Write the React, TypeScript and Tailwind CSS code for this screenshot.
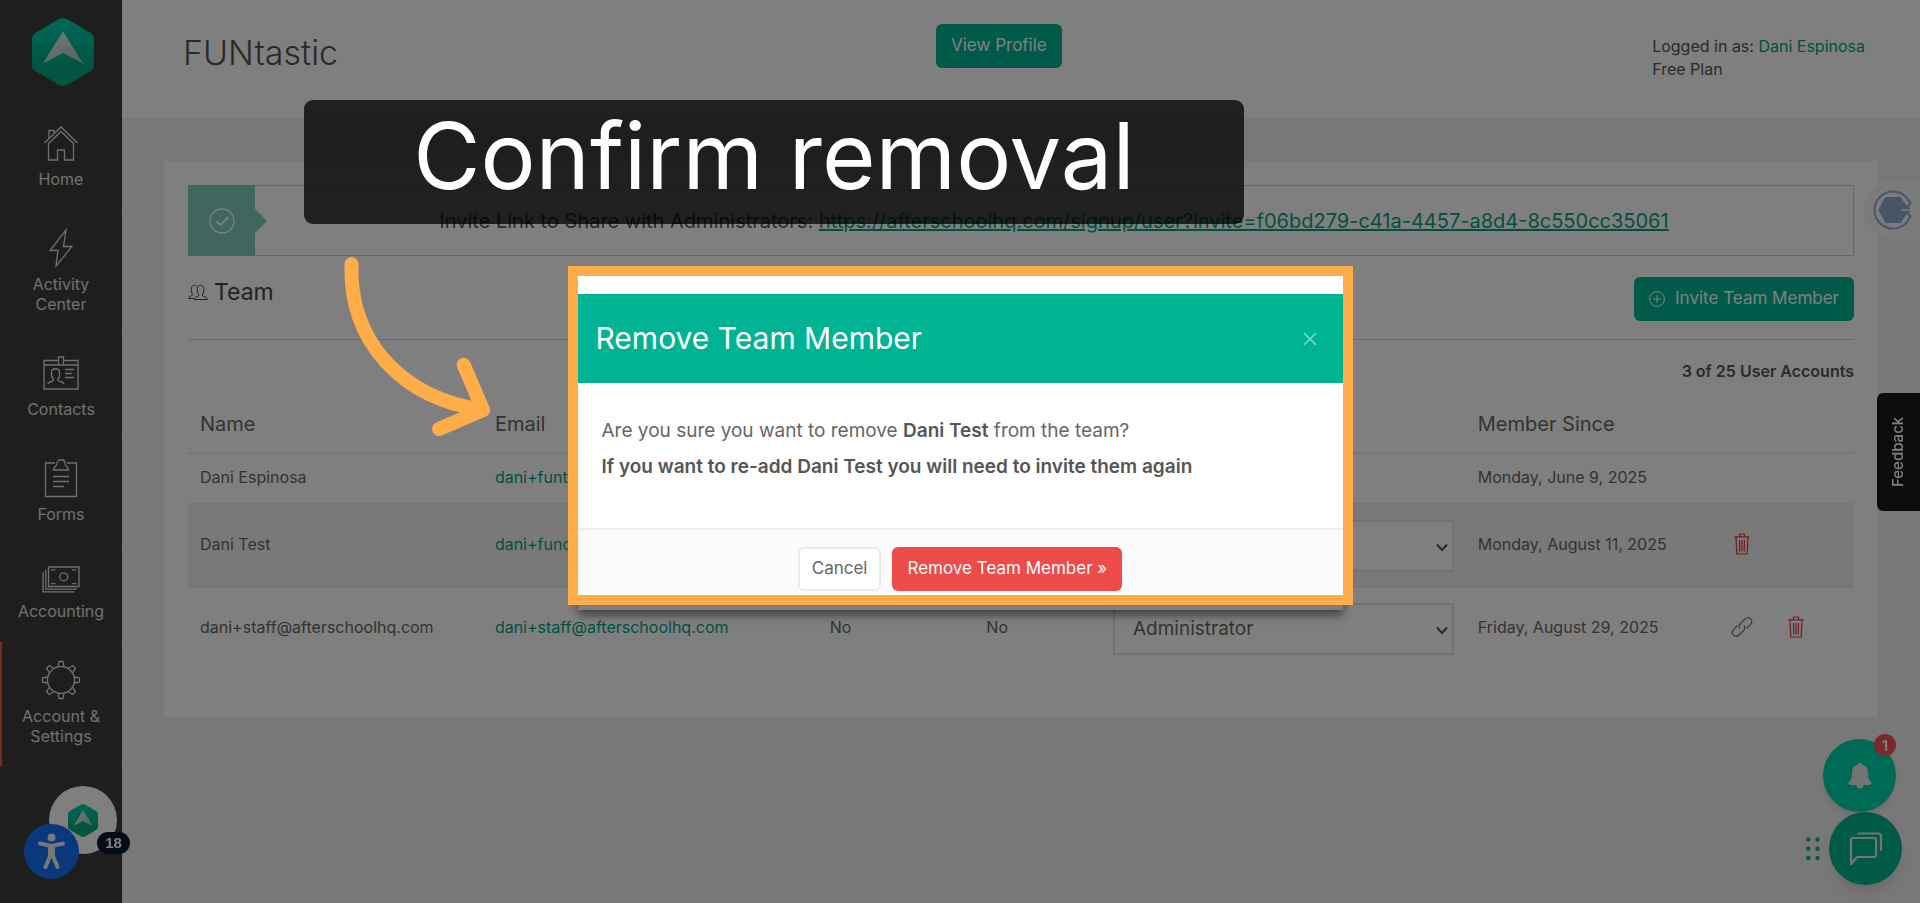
import React from 'react';

interface NavItem {
  label: string;
  icon: React.ElementType;
  short?: boolean;
  active?: boolean;
}

interface Member {
  name: string;
  email: string;
  flag?: string;
  since: string;
  editable: boolean;
  pending: boolean;
}

interface IconProps {
  className?: string;
}

const HexLogo: React.FC<IconProps> = ({ className }) => (
  <svg viewBox="0 0 62 68" className={className} aria-hidden="true">
    <defs>
      <linearGradient id="hex" x1="0" y1="0" x2="0" y2="1">
        <stop offset="0" stopColor="#00d0b0" />
        <stop offset="0.75" stopColor="#00a880" />
      </linearGradient>
      <linearGradient id="wing" x1="0" y1="0" x2="1" y2="1">
        <stop offset="0" stopColor="#e4f0ed" />
        <stop offset="1" stopColor="#a8c8be" />
      </linearGradient>
    </defs>
    <path
      d="M26 1.500Q31-1 36 1.500L58 14.500Q62 17 62 21V47Q62 51 58 53.500L36 66.500Q31 69 26 66.500L4 53.500Q0 51 0 47V21Q0 17 4 14.500Z"
      fill="url(#hex)"
    />
    <path d="M31 13L51 45.500L31 35L11 45.500Z" fill="url(#wing)" />
  </svg>
);

const HomeIcon: React.FC = () => (
  <svg width="36" height="36" viewBox="0 0 36 36" fill="none" stroke="currentColor" strokeWidth="1.3">
    <path d="M1.500 18L18 2L34.500 18" />
    <path d="M5.500 18.500L18 6.500L30.500 18.500V35H21.500V25H14.500V35H5.500Z" />
    <path d="M6 13.500V5.500H11V8.500" />
  </svg>
);

const BoltIcon: React.FC = () => (
  <svg width="26" height="40" viewBox="0 0 26 40" fill="none" stroke="currentColor" strokeWidth="1.3">
    <path d="M18 2L2 22.500H10L8 38L24 18.500H15.500Z" />
  </svg>
);

const ContactsIcon: React.FC = () => (
  <svg width="36" height="36" viewBox="0 0 36 36" fill="none" stroke="currentColor" strokeWidth="1.3">
    <path d="M15.500 5.500H1V34H35V5.500H20.500M1 10H15.500M20.500 10H35" />
    <path d="M15.500 2H20.500V10H15.500Z" />
    <path d="M5 29C5 26 10.500 27.500 10.500 24.500C9 23 8.300 20.500 8.500 17.500C8.700 12.500 16.500 12.500 16.600 17.500C17 20.500 16 23 14.800 24.500C14.800 27.500 21 26 21 29" />
    <path d="M22 14.500H31M22 18.500H29M22 22.500H31" />
  </svg>
);

const FormsIcon: React.FC = () => (
  <svg width="34" height="40" viewBox="0 0 34 40" fill="none" stroke="currentColor" strokeWidth="1.3">
    <path d="M11 5H1.500V38.500H32.500V5H23" />
    <path d="M9.500 12C9.500 8.500 13 8.500 13 5.500C13 0.500 21 0.500 21 5.500C21 8.500 24.500 8.500 24.500 12Z" />
    <path d="M9 18.500H25M9 23.500H25M9 28.500H20" />
  </svg>
);

const MoneyIcon: React.FC = () => (
  <svg width="38" height="27" viewBox="0 0 38 27" fill="none" stroke="currentColor" strokeWidth="1.3">
    <path d="M6.500 1H37V20.500H6.500Z" />
    <path d="M3.800 3.500V23.200H35M1 6V25.800H32.500" />
    <circle cx="21.700" cy="10.800" r="4" />
    <path d="M9 3.800H13.500M30 3.800H34.500M9 17.700H13.500M30 17.700H34.500" />
  </svg>
);

const GearIcon: React.FC = () => (
  <svg width="40" height="40" viewBox="-20 -20 40 40" fill="none" stroke="currentColor" strokeWidth="1.3">
    <circle r="13.500" />
    {[0, 45, 90, 135, 180, 225, 270, 315].map((angle) => (
      <path key={angle} d="M-3-13.500L-2-18.500H2L3-13.500" transform={`rotate(${angle})`} />
    ))}
  </svg>
);

const TeamIcon: React.FC = () => (
  <svg width="20" height="17" viewBox="0 0 20 17" fill="none" stroke="currentColor" strokeWidth="1">
    <path d="M6.500 15.500C6.500 12 11 13 11 11C9.500 9 9 7 9.300 4.500C9.500 0 15.500 0 15.800 4.500C16 7 15.500 9 14.200 11C14.200 13 19.300 12 19.300 15.500Z" />
    <path d="M8.500 2C6 0.500 3.500 1.500 3.300 4.800C3.200 7 3.500 9 4.700 10.500C4.700 12.500 0.600 11.500 0.600 14.500H6" />
  </svg>
);

const TrashIcon: React.FC = () => (
  <svg width="16" height="22" viewBox="0 0 16 22" fill="none" stroke="currentColor" strokeWidth="1.2">
    <path d="M0.500 3.800H15.500M5.500 3.500V1H10.500V3.500M2 4L2.800 21H13.200L14 4M5.500 7L5.800 18.500M8 7V18.500M10.500 7L10.200 18.500" />
  </svg>
);

const LinkIcon: React.FC = () => (
  <svg width="22" height="22" viewBox="0 0 22 22" fill="none" stroke="currentColor" strokeWidth="1.2">
    <path d="M9 12.500C7.500 10.500 8 9 9.500 7.500L14 3C18 -0.500 23 4.500 19.500 8.500L15.500 12.500" />
    <path d="M13 9.500C14.500 11.500 14 13 12.500 14.500L8 19C4 22.500 -1 17.500 2.500 13.500L6.500 9.500" />
  </svg>
);

const navItems: NavItem[] = [
  { label: 'Home', icon: HomeIcon },
  { label: 'Activity Center', icon: BoltIcon },
  { label: 'Contacts', icon: ContactsIcon },
  { label: 'Forms', icon: FormsIcon },
  { label: 'Accounting', icon: MoneyIcon, short: true },
  { label: 'Account & Settings', icon: GearIcon, active: true },
];

const members: Member[] = [
  { name: 'Dani Espinosa', email: 'dani+funtas', since: 'Monday, June 9, 2025', editable: false, pending: false },
  { name: 'Dani Test', email: 'dani+func', since: 'Monday, August 11, 2025', editable: true, pending: false },
  {
    name: 'dani+staff@afterschoolhq.com',
    email: 'dani+staff@afterschoolhq.com',
    flag: 'No',
    since: 'Friday, August 29, 2025',
    editable: true,
    pending: true,
  },
];

const Sidebar: React.FC = () => (
  <nav className="w-[122px] shrink-0 bg-[#3c3c3c] text-[#e0e0e0]">
    <a href="#" aria-label="Dashboard" className="flex h-[104px] items-center justify-center pl-1">
      <HexLogo className="w-[62px] h-[68px]" />
    </a>
    {navItems.map(({ label, icon: Icon, short, active }) => (
      <a
        key={label}
        href="#"
        className={`flex flex-col items-center border-t border-t-[#464646] px-4 pt-[18px] pb-5 text-center text-[16px] leading-5 ${
          active ? 'border-l-2 border-l-[#e85656] pr-[18px]' : ''
        }`}
      >
        <span className={`mb-1.5 flex items-center ${short ? 'h-8' : 'h-10'}`}>
          <Icon />
        </span>
        {label}
      </a>
    ))}
    <div className="border-t border-[#464646]" />
  </nav>
);

const Header: React.FC = () => (
  <header className="grid h-[118px] grid-cols-[15fr_auto_16fr] bg-white pl-[61px] pr-[55px] text-[#555]">
    <h1 className="pt-8 text-[34px] leading-[42px] font-light">FUNtastic</h1>
    <div className="pt-6">
      <button className="h-11 rounded-md bg-[#00b492] px-[15px] text-[17px] text-white">View Profile</button>
    </div>
    <div className="justify-self-end pt-[35px] text-[16px] leading-[23px]">
      <p>
        Logged in as: <a href="#" className="text-[#00a184]">Dani Espinosa</a>
      </p>
      <p>Free Plan</p>
    </div>
  </header>
);

const TeamTable: React.FC = () => (
  <table className="w-full table-fixed text-left text-[16px] text-[#666]">
    <colgroup>
      <col className="w-[17.7%]" />
      <col className="w-[20.1%]" />
      <col className="w-[9.4%]" />
      <col className="w-[7.6%]" />
      <col className="w-[21.9%]" />
      <col className="w-[15.2%]" />
      <col className="w-[8.1%]" />
    </colgroup>
    <thead>
      <tr className="h-[62px] text-[20px]">
        <th className="px-3 pt-1 font-normal">Name</th>
        <th className="px-3 pt-1 font-normal">Email</th>
        <th />
        <th />
        <th />
        <th className="px-3 pt-1 font-normal">Member Since</th>
        <th />
      </tr>
    </thead>
    <tbody>
      {members.map((member) => (
        <tr
          key={member.name}
          className={`border-t-2 border-[#ececec] even:bg-[#f3f3f3] ${member.editable ? 'h-[83px]' : 'h-[51px]'}`}
        >
          <td className="px-3 pb-1 whitespace-nowrap">{member.name}</td>
          <td className="px-3 pb-1 whitespace-nowrap">
            <a href="#" className="text-[#00a184]">{member.email}</a>
          </td>
          <td className="px-3 pb-1">{member.flag}</td>
          <td className="px-3 pb-1">{member.flag}</td>
          <td className="px-3">
            {member.editable && (
              <div className="relative">
                <select
                  aria-label={`Role of ${member.name}`}
                  className="h-[52px] w-full appearance-none border-2 border-[#e4e4e4] bg-white px-[18px] text-[19px]"
                >
                  <option>Administrator</option>
                </select>
                <svg className="absolute right-1.5 top-[23px]" width="12" height="9" viewBox="0 0 12 9" fill="none" stroke="#555" strokeWidth="2">
                  <path d="M1 1.500L6 7L11 1.500" />
                </svg>
              </div>
            )}
          </td>
          <td className="px-3 pb-1 whitespace-nowrap">{member.since}</td>
          <td className="px-3 pb-1">
            {member.editable && (
              <div className="flex items-center gap-8">
                {member.pending && (
                  <button aria-label="Copy invite link" className="text-[#777]">
                    <LinkIcon />
                  </button>
                )}
                <button aria-label="Remove" className="px-[3px] text-[#e03a40]">
                  <TrashIcon />
                </button>
              </div>
            )}
          </td>
        </tr>
      ))}
    </tbody>
  </table>
);

const TeamCard: React.FC = () => (
  <main className="mx-[42px] mt-[43px] bg-white px-6 pt-6 pb-[47px]">
    {/* Invite link */}
    <div className="flex h-[71px] border border-[#d0d0d0] text-[20px] text-[#555]">
      <div className="relative -my-px -ml-px flex w-[67px] items-center justify-center bg-[#7fcfbd] text-white">
        <svg width="26" height="26" viewBox="0 0 26 26" fill="none" stroke="currentColor" strokeWidth="1.3">
          <circle cx="13" cy="13" r="12" />
          <path d="M7.500 13.500L11.500 17L19.500 9" strokeWidth="1.8" />
        </svg>
        <svg className="absolute left-full" width="12" height="24" viewBox="0 0 12 24" fill="#7fcfbd">
          <path d="M0 0L12 12L0 24Z" />
        </svg>
      </div>
      <p className="flex-1 self-center text-center">
        Invite Link to Share with Administrators:{' '}
        <a href="#" className="text-[#00a184] underline">
          https://afterschoolhq.com/signup/user?invite=f06bd279-c41a-4457-a8d4-8c550cc35061
        </a>
      </p>
    </div>

    {/* Team heading */}
    <div className="flex justify-between border-b border-[#d4d4d4] pt-[21px] pb-[18px]">
      <h2 className="flex h-[30px] items-center gap-1.5 text-[23px] text-[#444]">
        <TeamIcon />
        Team
      </h2>
      <button className="flex h-11 items-center gap-2.5 rounded-md bg-[#00b492] px-[15px] text-[17px] text-white">
        <svg width="16" height="16" viewBox="0 0 16 16" fill="none" stroke="currentColor">
          <circle cx="8" cy="8" r="7.400" />
          <path d="M8 4V12M4 8H12" />
        </svg>
        Invite Team Member
      </button>
    </div>

    <p className="pt-5 pb-[9px] text-right text-[16px] leading-[22px] font-semibold text-[#555]">3 of 25 User Accounts</p>
    <TeamTable />
  </main>
);

const HelpWidgets: React.FC = () => (
  <>
    {/* Resource center and accessibility */}
    <div className="fixed bottom-[22px] left-6 h-[95px] w-[110px]">
      <button aria-label="Resource center" className="absolute top-0 left-[25px] flex h-[68px] w-[68px] items-center justify-center rounded-full bg-white">
        <HexLogo className="h-[33px] w-[30px]" />
      </button>
      <button aria-label="Accessibility" className="absolute top-[38px] left-0 h-[55px] w-[55px] rounded-full bg-[#1470fa]">
        <svg width="55" height="55" viewBox="0 0 55 55" stroke="#f0f0f0" strokeWidth="4" strokeLinecap="round" strokeLinejoin="round" fill="none">
          <circle cx="27.500" cy="13.500" r="4" fill="#f0f0f0" stroke="none" />
          <path d="M16 19.500L27.500 22L39 19.500" />
          <path d="M26.500 31L21.500 43M28.500 31L33.500 43" />
          <path d="M27.500 23.500V31" strokeWidth="7" />
        </svg>
      </button>
      <span className="absolute top-[46px] left-[73px] flex h-[22px] w-[33px] items-center justify-center rounded-full bg-[#0c1630] font-['Liberation_Sans',sans-serif] text-[15px] font-bold text-white">
        18
      </span>
    </div>

    {/* Browser extension tab */}
    <div className="fixed top-[180px] right-0 flex h-[59px] w-[56px] items-center rounded-l-full bg-[#f6f6f6] pl-[9px]">
      <svg width="40" height="40" viewBox="0 0 40 40" fill="none">
        <path d="M33.500 16.500L37.500 14A18.500 18.500 0 1 0 37.500 26L33.500 23.500" stroke="#93a9d2" strokeWidth="2" strokeLinejoin="round" />
        <path d="M13 8H27L32.500 16L26 20L32.500 24L27 32H13L6.500 20Z" fill="#93a9d2" stroke="#93a9d2" strokeWidth="2" strokeLinejoin="round" />
        <path d="M37 18H31C27 10 19 11 15.500 14C12 17.500 12 22.500 15.500 26C19 29 27 30 31 22H37" stroke="#84b8bc" strokeWidth="2.5" />
      </svg>
    </div>

    {/* Feedback tab */}
    <button className="fixed top-[393px] right-0 flex h-[118px] w-[43px] rotate-180 items-center justify-center rounded-r-md bg-[#16191c] text-[15px] font-medium text-white [writing-mode:vertical-rl]">
      Feedback
    </button>

    {/* Chat and notifications */}
    <div className="fixed right-[18px] bottom-[18px] flex flex-col items-end">
      <button aria-label="Notifications" className="relative mr-1.5 flex h-[73px] w-[73px] items-center justify-center rounded-full bg-[#00d6a8] text-[#e8e8e8] shadow-md">
        <svg width="24" height="27" viewBox="0 0 24 27" fill="currentColor">
          <path d="M12 0.500C13 0.500 13.600 1.300 13.600 2.500C18 3.300 20 6.500 20 10.500C20 15.500 20.500 18 23 19.500C24 20.500 23.500 23 22 23H15.500C15.500 25 14 26.500 12 26.500C10 26.500 8.500 25 8.500 23H2C0.500 23 0 20.500 1 19.500C3.500 18 4 15.500 4 10.500C4 6.500 6 3.300 10.400 2.500C10.400 1.300 11 0.500 12 0.500Z" />
        </svg>
        <span className="absolute -top-[5px] right-0 flex h-[22px] w-[22px] items-center justify-center rounded-full bg-[#f05459] text-[14px] font-bold text-white">
          1
        </span>
      </button>
      <div className="flex items-center gap-[9px]">
        <svg width="14" height="24" viewBox="0 0 14 24" fill="#00b48a">
          <circle cx="2.300" cy="2.500" r="2.200" />
          <circle cx="11.500" cy="2.500" r="2.200" />
          <circle cx="2.300" cy="11.800" r="2.200" />
          <circle cx="11.500" cy="11.800" r="2.200" />
          <circle cx="2.300" cy="21" r="2.200" />
          <circle cx="11.500" cy="21" r="2.200" />
        </svg>
        <button aria-label="Chat" className="flex h-[73px] w-[73px] items-center justify-center rounded-full bg-[#00b48a] text-[#e8e8e8] shadow-lg">
          <svg width="34" height="34" viewBox="0 0 34 34" fill="none" stroke="currentColor" strokeWidth="2.2" strokeLinejoin="round" strokeLinecap="round">
            <path d="M4 6H25Q27 6 27 8V23Q27 25 25 25H8L2 32V8Q2 6 4 6Z" />
            <path d="M9 1.500H29Q32 1.500 32 4.500V18" />
          </svg>
        </button>
      </div>
    </div>
  </>
);

const RemoveDialog: React.FC = () => (
  <div role="dialog" aria-labelledby="dialog-title" className="fixed inset-0 flex items-start justify-center pt-[266px]">
    <div className="relative w-[785px]">
      <div className="absolute inset-x-[10px] -bottom-[5px] h-5 bg-[#7e7e7e] shadow-[0_5px_10px_rgba(0,0,0,0.5)]" />
      <div className="relative border-[10px] border-[#ffad48] bg-white pt-[18px] text-[#666]">
        <div className="flex h-[89px] items-center justify-between bg-[#00b393] px-[18px] text-white">
          <h2 id="dialog-title" className="text-[30px]">Remove Team Member</h2>
          <button aria-label="Close" className="px-2 text-[#80d9c9]">
            <svg width="14" height="14" viewBox="0 0 14 14" stroke="currentColor" strokeWidth="1.5">
              <path d="M1 1L13 13M13 1L1 13" />
            </svg>
          </button>
        </div>
        <div className="h-[145px] px-6 pt-[30px] text-[19px] leading-9">
          <p>
            Are you sure you want to remove <strong className="font-semibold text-[#555]">Dani Test</strong> from the team?
          </p>
          <p className="font-semibold text-[#555]">If you want to re-add Dani Test you will need to invite them again</p>
        </div>
        <div className="flex justify-center gap-[11px] border-t-2 border-[#efefef] bg-[#fbfbfb] pt-[17px] pb-1 text-[17px]">
          <button className="h-11 rounded-md border-2 border-[#ebebeb] bg-white px-3">Cancel</button>
          <button className="h-11 rounded-md bg-[#ee4b4b] px-[15px] text-white">Remove Team Member »</button>
        </div>
      </div>
    </div>
  </div>
);

const App: React.FC = () => (
  <div className="flex min-h-screen bg-[#f0f0f0] font-[Inter,sans-serif]">
    <Sidebar />
    <div className="min-w-0 flex-1">
      <Header />
      <TeamCard />
    </div>
    <HelpWidgets />

    {/* Dimmed backdrop */}
    <div className="fixed inset-0 bg-black/50" />

    <div className="fixed top-[100px] left-[304px] flex h-[124px] w-[940px] items-center justify-center rounded-[9px] bg-black/75 pb-3 text-[92px] text-white">
      Confirm removal
    </div>
    <RemoveDialog />

    <svg className="fixed top-[250px] left-[340px]" width="160" height="195" viewBox="340 250 160 195" fill="none" stroke="#ffad48" strokeWidth="14" strokeLinecap="round" strokeLinejoin="round">
      <path d="M351.500 264C349 340 400 398 483 410" />
      <path d="M463.700 364.700L483 410L439 429" />
    </svg>
  </div>
);

export default App;
